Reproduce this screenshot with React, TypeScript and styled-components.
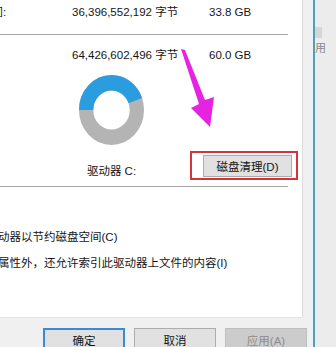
import React from 'react';

import styled, { createGlobalStyle } from 'styled-components';

const GlobalStyle = createGlobalStyle`
  html, body {
    margin: 0;
    padding: 0;
    overflow: hidden;
    background: #ebebeb;
  }

  body {
    font-family: "Liberation Sans", "Noto Sans CJK SC", sans-serif;
    font-size: 11.5px;
    color: #151515;
  }
`;

const USED = 26.6;
const TOTAL = 60.0;
const RING_R = 39;
const RING_LEN = 2 * Math.PI * RING_R;

const App = () => {
  const usedLen = (USED / TOTAL) * RING_LEN;

  return (
    <>
      <GlobalStyle />
      <Screen>
        <Dialog>
          <Panel>
            <InfoRow top={4}>
              <Label>可用空间:</Label>
              <span>36,396,552,192 字节</span>
              <span>33.8 GB</span>
            </InfoRow>
            <Divider top={14} />
            <InfoRow top={12}>
              <Label>容量:</Label>
              <span>64,426,602,496 字节</span>
              <span>60.0 GB</span>
            </InfoRow>

            <DriveArea>
              <DriveColumn>
                <Donut viewBox="0 0 100 100" preserveAspectRatio="none">
                  <circle
                    cx="50"
                    cy="50"
                    r={RING_R}
                    fill="none"
                    stroke="#b4b4b4"
                    strokeWidth="22"
                  />
                  <circle
                    cx="50"
                    cy="50"
                    r={RING_R}
                    fill="none"
                    stroke="#2b9dde"
                    strokeWidth="22"
                    strokeDasharray={`${usedLen} ${RING_LEN}`}
                    transform="rotate(180 50 50)"
                  />
                </Donut>
                <DriveLabel>驱动器 C:</DriveLabel>
              </DriveColumn>
              <CleanupWrap>
                <PushButton width={89} height={22}>
                  磁盘清理(D)
                </PushButton>
                <Highlight />
              </CleanupWrap>
            </DriveArea>

            <Divider top={7} />
            <OptionLine top={42}>压缩此驱动器以节约磁盘空间(C)</OptionLine>
            <OptionLine top={10}>
              除了文件属性外，还允许索引此驱动器上文件的内容(I)
            </OptionLine>
          </Panel>

          <ButtonBar>
            <PushButton width={82} height={23} focused>
              确定
            </PushButton>
            <PushButton width={82} height={23}>
              取消
            </PushButton>
            <PushButton width={82} height={23} disabled>
              应用(A)
            </PushButton>
          </ButtonBar>
        </Dialog>

        <GlowStrip />
        <WindowBorder />
        <Behind>
          <BehindBlock />
          <BehindText>用</BehindText>
        </Behind>

        <Arrow width="336" height="347" viewBox="0 0 336 347">
          <polygon
            points="181,49 185,50 205,100 214,97 210,127 191,108 199,104"
            fill="#e523e0"
          />
        </Arrow>
      </Screen>
    </>
  );
};

export default App;

const Screen = styled.div`
  position: relative;
  display: flex;
  width: 336px;
  height: 347px;
  overflow: hidden;
  background: #ebebeb;
`;

const Dialog = styled.div`
  flex: none;
  width: 309px;
  display: flex;
  flex-direction: column;
  background: #f0f0f0;
`;

const Panel = styled.div`
  flex: none;
  width: 303px;
  height: 318px;
  box-sizing: border-box;
  display: flex;
  flex-direction: column;
  overflow: hidden;
  background: #fff;
  border-right: 1px solid #dcdcdc;
  border-bottom: 1px solid #e3e3e3;
`;

const InfoRow = styled.div<{ top: number }>`
  display: grid;
  grid-template-columns: 115px 137px auto;
  height: 16px;
  line-height: 16px;
  margin-top: ${(p) => p.top}px;
  margin-left: -43px;
  white-space: nowrap;
`;

const Label = styled.span`
  white-space: nowrap;
`;

const Divider = styled.div<{ top: number }>`
  flex: none;
  width: 288px;
  height: 1px;
  margin-top: ${(p) => p.top}px;
  background: #a5a5a5;
`;

const DriveArea = styled.div`
  display: flex;
  align-items: flex-end;
  margin-top: 12px;
`;

const DriveColumn = styled.div`
  display: flex;
  flex-direction: column;
  align-items: center;
  width: 65px;
  margin-left: 79px;
`;

const Donut = styled.svg`
  display: block;
  width: 65px;
  height: 70px;
`;

const DriveLabel = styled.div`
  margin-top: 18px;
  height: 16px;
  line-height: 16px;
  white-space: nowrap;
`;

const CleanupWrap = styled.div`
  position: relative;
  margin-left: 59px;
  margin-bottom: 2px;
`;

const Highlight = styled.div`
  position: absolute;
  top: -4px;
  left: -13px;
  right: -6px;
  bottom: -3px;
  border: 2px solid #d5343c;
  pointer-events: none;
`;

const PushButton = styled.button<{
  width: number;
  height: number;
  focused?: boolean;
}>`
  flex: none;
  width: ${(p) => p.width}px;
  height: ${(p) => p.height}px;
  box-sizing: border-box;
  padding: 0;
  font: inherit;
  color: #151515;
  background: #e1e1e1;
  border: 1px solid #adadad;
  border-radius: 0;
  white-space: nowrap;

  ${(p) =>
    p.focused &&
    `
    border: 2px solid #3c8ad6;
  `}

  &:disabled {
    color: #8c8c8c;
    background: #cccccc;
    border-color: #bfbfbf;
  }
`;

const OptionLine = styled.div<{ top: number }>`
  height: 16px;
  line-height: 16px;
  margin-top: ${(p) => p.top}px;
  margin-left: -48px;
  white-space: nowrap;
`;

const ButtonBar = styled.div`
  display: flex;
  gap: 9px;
  padding: 10px 0 0 43px;
  width: 309px;
  box-sizing: border-box;
`;

const GlowStrip = styled.div`
  flex: none;
  width: 4px;
  background: #e9f3f6;
`;

const WindowBorder = styled.div`
  flex: none;
  width: 2px;
  background: #5a9db1;
`;

const Behind = styled.div`
  flex: 1;
  display: flex;
  flex-direction: column;
  padding-top: 27px;
  background: #ececec;
`;

const BehindBlock = styled.div`
  width: 7px;
  height: 11px;
  background: #d6d6d6;
`;

const BehindText = styled.div`
  margin-top: 3px;
  font-size: 11px;
  line-height: 14px;
  color: #8a8a8a;
`;

const Arrow = styled.svg`
  position: absolute;
  left: 0;
  top: 0;
  pointer-events: none;
`;
